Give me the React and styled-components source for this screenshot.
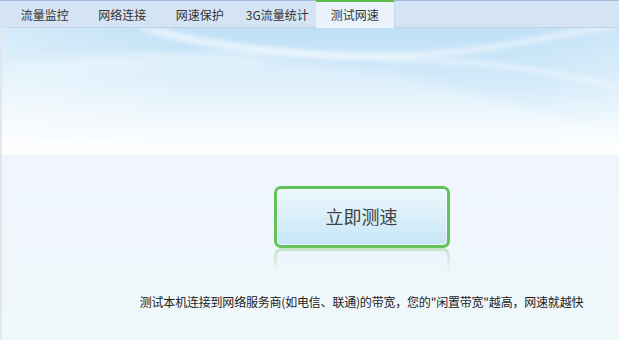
import React from 'react';
import styled, {createGlobalStyle} from 'styled-components';

const tabs = ['流量监控', '网络连接', '网速保护', '3G流量统计', '测试网速'];

function App() {
  return (
    <Window>
      <GlobalStyle />
      <TabBar>
        {tabs.map((t, i) => (
          <Tab key={t} $active={i === tabs.length - 1}>{t}</Tab>
        ))}
        <TabFiller />
      </TabBar>
      <Content>
        {/* banner artwork */}
        <Banner>
          <svg width="100%" height="100%" viewBox="0 0 617 128" preserveAspectRatio="none">
            <defs>
              <linearGradient id="sky" x1="0" y1="0" x2="0" y2="1">
                <stop offset="0" stopColor="#bfe0f6" />
                <stop offset="0.45" stopColor="#d4ebfa" />
                <stop offset="0.8" stopColor="#f2f9fe" />
                <stop offset="1" stopColor="#ffffff" />
              </linearGradient>
              <linearGradient id="side" x1="0" y1="0" x2="1" y2="0">
                <stop offset="0" stopColor="#ffffff" stopOpacity="0.35" />
                <stop offset="0.3" stopColor="#ffffff" stopOpacity="0" />
                <stop offset="0.85" stopColor="#ffffff" stopOpacity="0" />
                <stop offset="1" stopColor="#ffffff" stopOpacity="0.2" />
              </linearGradient>
              <filter id="soft" x="-10%" y="-50%" width="120%" height="200%">
                <feGaussianBlur stdDeviation="2.5" />
              </filter>
              <filter id="softer" x="-10%" y="-50%" width="120%" height="200%">
                <feGaussianBlur stdDeviation="6" />
              </filter>
            </defs>
            <rect width="617" height="128" fill="url(#sky)" />
            <rect width="617" height="128" fill="url(#side)" />
            <path d="M0 55 C 90 20, 220 25, 330 38 C 430 50, 520 80, 617 110 L617 128 L0 128 Z"
              fill="#ffffff" opacity="0.28" filter="url(#softer)" />
            <path d="M140 0 C 200 20, 280 28, 380 28 C 470 28, 540 10, 617 -4"
              stroke="#ffffff" strokeWidth="6" fill="none" opacity="0.5" filter="url(#soft)" />
            <path d="M150 0 C 230 22, 330 30, 420 32 C 500 35, 560 45, 617 60"
              stroke="#ffffff" strokeWidth="5" fill="none" opacity="0.45" filter="url(#soft)" />
            <path d="M0 45 C 80 30, 180 28, 260 32"
              stroke="#ffffff" strokeWidth="10" fill="none" opacity="0.35" filter="url(#softer)" />
          </svg>
        </Banner>
        <Body>
          <SpeedButton>立即测速</SpeedButton>
          <Reflection />
          <Caption>测试本机连接到网络服务商(如电信、联通)的带宽，您的"闲置带宽"越高，网速就越快</Caption>
        </Body>
      </Content>
    </Window>
  );
}

const GlobalStyle = createGlobalStyle`
  body {
    margin: 0;
    background: #fff;
    font-family: "Noto Sans CJK SC", "Noto Sans", sans-serif;
  }
`
const Window = styled.div`
  width: 619px;
  height: 340px;
  display: flex;
  flex-direction: column;
  overflow: hidden;
`
const TabBar = styled.div`
  height: 28px;
  display: flex;
  padding-left: 6px;
  box-sizing: border-box;
  background: #d5e4f4;
  border-top: 1px solid #9fbddb;
`
const Tab = styled.div`
  width: 77.5px;
  flex-shrink: 0;
  display: flex;
  align-items: center;
  justify-content: center;
  font-size: 12px;
  color: #333;
  box-sizing: border-box;
  background: ${p => p.$active ? '#eaf3fb' : 'transparent'};
  border-top: 2px solid ${p => p.$active ? '#5cbc45' : 'transparent'};
  border-bottom: 1px solid ${p => p.$active ? '#eaf3fb' : '#c0d3e6'};
  margin-top: -1px;
`
const TabFiller = styled.div`
  flex: 1;
  border-bottom: 1px solid #c0d3e6;
  border-left: 1px solid #c8d8ea;
`
const Content = styled.div`
  flex: 1;
  display: flex;
  flex-direction: column;
  border-left: 2px solid #e3e6ea;
`
const Banner = styled.div`
  height: 127px;
  svg { display: block; }
`
const Body = styled.div`
  flex: 1;
  display: flex;
  flex-direction: column;
  align-items: center;
  padding: 31px 0 0 102px;
  background: linear-gradient(#f0f5fd, #eff8fb);
`
const SpeedButton = styled.button`
  width: 176px;
  height: 62px;
  box-sizing: border-box;
  border: 3px solid #63c258;
  border-radius: 7px;
  background: linear-gradient(#edf7fd, #d9eff9 50%, #c6e6f8);
  box-shadow: inset 0 0 0 1px rgba(255,255,255,0.6);
  font-family: "Noto Sans CJK SC", sans-serif;
  font-size: 18px;
  color: #404040;
  padding: 0 0 2px;
  cursor: pointer;
`
const Reflection = styled.div`
  width: 176px;
  height: 24px;
  box-sizing: border-box;
  border: 3px solid #9ad491;
  border-bottom: none;
  border-radius: 7px 7px 0 0;
  background: linear-gradient(#e2f1f8, #f0f7fb);
  -webkit-mask-image: linear-gradient(rgba(0,0,0,0.55), transparent);
  mask-image: linear-gradient(rgba(0,0,0,0.55), transparent);
`
const Caption = styled.div`
  margin-top: 21px;
  font-size: 12px;
  letter-spacing: -0.2px;
  color: #222;
  white-space: nowrap;
`

export default App;
